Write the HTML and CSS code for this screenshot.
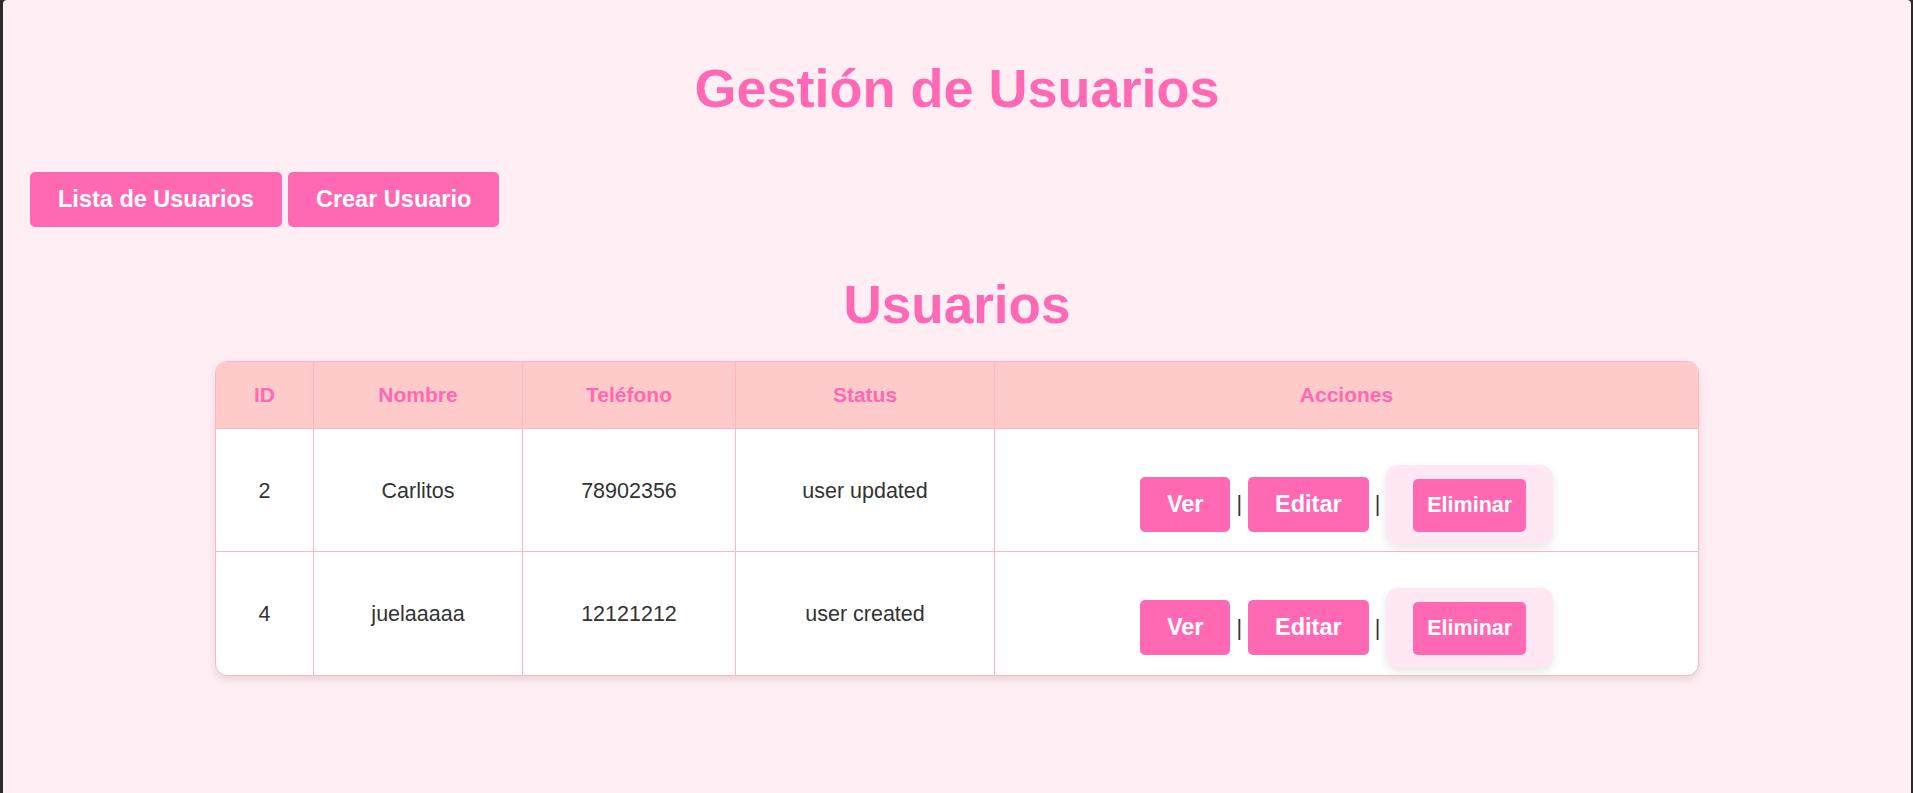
FILE: index.html
```html
<!DOCTYPE html>
<html lang="es">
<head>
<meta charset="utf-8">
<title>Gestión de Usuarios</title>
<link rel="stylesheet" href="styles.css">
</head>
<body>
<div class="page">
  <h1 class="title">Gestión de Usuarios</h1>
  <nav class="nav">
    <a class="btn nav-btn" href="#">Lista de Usuarios</a>
    <a class="btn nav-btn" href="#">Crear Usuario</a>
  </nav>
  <h2 class="subtitle">Usuarios</h2>
  <table class="users">
    <colgroup>
      <col class="c-id"><col class="c-name"><col class="c-phone"><col class="c-status"><col class="c-actions">
    </colgroup>
    <thead>
      <tr><th>ID</th><th>Nombre</th><th>Teléfono</th><th>Status</th><th>Acciones</th></tr>
    </thead>
    <tbody>
      <tr>
        <td>2</td><td>Carlitos</td><td>78902356</td><td>user updated</td>
        <td class="actions">
          <div class="action-group">
            <a class="btn act-btn" href="#">Ver</a><span class="sep">|</span><a class="btn act-btn" href="#">Editar</a><span class="sep">|</span><form class="del-form"><button type="button" class="btn del-btn">Eliminar</button></form>
          </div>
        </td>
      </tr>
      <tr>
        <td>4</td><td>juelaaaaa</td><td>12121212</td><td>user created</td>
        <td class="actions">
          <div class="action-group">
            <a class="btn act-btn" href="#">Ver</a><span class="sep">|</span><a class="btn act-btn" href="#">Editar</a><span class="sep">|</span><form class="del-form"><button type="button" class="btn del-btn">Eliminar</button></form>
          </div>
        </td>
      </tr>
    </tbody>
  </table>
</div>
</body>
</html>
```

FILE: styles.css
```css
html {
  background: #2b2b2b;
}

body {
  margin: 0 2px 0 3px;
  min-height: 793px;
  background: #ffeef3;
  border-radius: 4px 4px 0 0;
  font-family: "Liberation Sans", Arial, sans-serif;
  color: #333;
}

.page {
  padding: 57px 27px 40px;
}

.title {
  margin: 0;
  font-size: 54px;
  line-height: 62px;
  font-weight: bold;
  color: #ff69b4;
  text-align: center;
}

.nav {
  display: flex;
  gap: 6px;
  margin-top: 53px;
}

.btn {
  display: inline-block;
  background: #ff69b4;
  color: #fff;
  font-family: "Liberation Sans", Arial, sans-serif;
  font-weight: bold;
  text-decoration: none;
  border: none;
  border-radius: 5px;
}

.nav-btn {
  font-size: 23.5px;
  line-height: 27px;
  padding: 14px 28px;
}

.subtitle {
  margin: 47px 0 0;
  font-size: 53px;
  line-height: 61px;
  font-weight: bold;
  color: #ff69b4;
  text-align: center;
}

.users {
  width: 1484px;
  margin: 26px auto 0;
  table-layout: fixed;
  border-collapse: separate;
  border-spacing: 0;
  border: 1px solid #ffb6c1;
  border-radius: 12px;
  overflow: hidden;
  background: #fff;
  box-shadow: 0 4px 10px rgba(0, 0, 0, 0.1);
}

.c-id { width: 98px; }
.c-name { width: 209px; }
.c-phone { width: 213px; }
.c-status { width: 259px; }

.users th {
  background: #ffcaca;
  color: #ff69b4;
  font-size: 21px;
  line-height: 24px;
  font-weight: bold;
  padding: 21px 0;
  text-align: center;
  border-right: 1px solid #ffb6c1;
  border-bottom: 1px solid #ffb6c1;
}

.users td {
  height: 123px;
  box-sizing: border-box;
  padding: 2px 0 0;
  font-size: 21.5px;
  text-align: center;
  vertical-align: middle;
  border-right: 1px solid #ffb6c1;
  border-bottom: 1px solid #ffb6c1;
}

.users th:last-child,
.users td:last-child {
  border-right: none;
}

.users tbody tr:last-child td {
  border-bottom: none;
}

.users td.actions {
  padding-top: 28px;
}

.action-group {
  display: flex;
  justify-content: center;
  align-items: center;
}

.act-btn {
  font-size: 23.5px;
  line-height: 27px;
  padding: 14px 27px;
}

.sep {
  margin: 0 6px;
  font-size: 21.5px;
  line-height: 24px;
  color: #333;
}

.del-form {
  margin: 0;
  padding: 14px 27px 12px;
  background: #ffe8f4;
  border-radius: 12px;
  box-shadow: 0 4px 10px rgba(0, 0, 0, 0.1);
}

.del-btn {
  display: block;
  font-size: 21.5px;
  line-height: 25px;
  padding: 14px 14px;
}
```
